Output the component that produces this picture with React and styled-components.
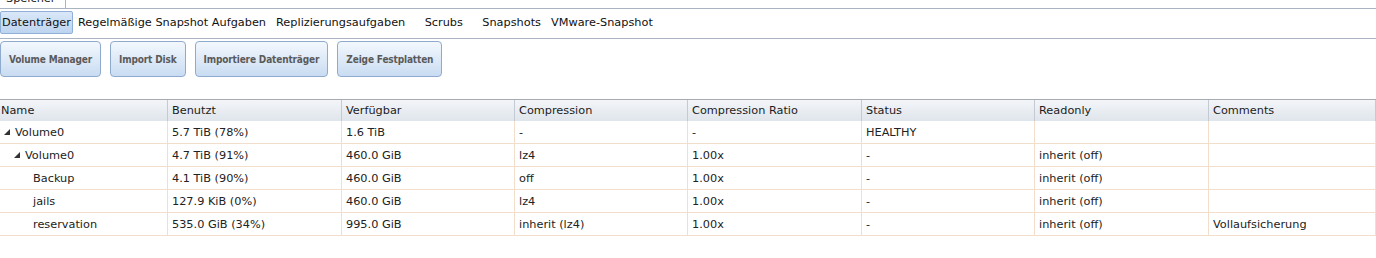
import styled, { createGlobalStyle } from "styled-components";

const GlobalStyle = createGlobalStyle`
  body {
    margin: 0;
    background: #fff;
    font-family: "DejaVu Sans", Verdana, sans-serif;
    font-size: 11.3px;
    color: #222;
  }
`;

const TopBar = styled.div`
  display: flex;
  align-items: flex-end;
  height: 8px;
  border-bottom: 1px solid #aab3c2;
  overflow: hidden;
`;

const MainTab = styled.div`
  height: 22px;
  width: 66px;
  box-sizing: border-box;
  padding: 0 0 4px 6px;
  display: flex;
  align-items: flex-end;
  border-right: 1px solid #aab3c2;
  margin-bottom: -1px;
  background: #fff;
  line-height: 13px;
`;

const SubTabs = styled.div`
  display: flex;
  align-items: center;
  padding: 2px 0 4px;
  border-bottom: 1px solid #aab3c2;
`;

const SubTab = styled.div`
  height: 23px;
  box-sizing: border-box;
  display: flex;
  align-items: center;
  justify-content: center;
  min-width: ${(p) => (p.$active ? "0" : "67px")};
  padding: 0 ${(p) => (p.$active ? "1px" : "4px")};
  color: #111;
  white-space: nowrap;
  border: 1px solid ${(p) => (p.$active ? "#8fb0d9" : "transparent")};
  border-radius: 2px;
  background: ${(p) =>
    p.$active ? "linear-gradient(#dae8f8, #bdd4ef)" : "transparent"};
`;

const Toolbar = styled.div`
  display: flex;
  gap: 9px;
  padding-top: 2px;
  margin-bottom: 22px;
`;

const Button = styled.button`
  height: 36px;
  padding: 0 8px;
  border: 1px solid #8eaacd;
  border-radius: 4px;
  background: linear-gradient(#f3f8fd, #c9dcf2);
  color: #5a5a5a;
  font-family: "DejaVu Sans Condensed", "DejaVu Sans", sans-serif;
  font-stretch: condensed;
  font-weight: bold;
  font-size: 10px;
  letter-spacing: -0.15px;
  white-space: nowrap;
`;

const COLS = "168px 174px 173px 173px 174px 173px 174px 1fr";

const HeaderRow = styled.div`
  display: grid;
  grid-template-columns: ${COLS};
  height: 22px;
  box-sizing: border-box;
  border-top: 1px solid #a7abb1;
  background: linear-gradient(#f3f5f8, #dfe5ec);
`;

const HeaderCell = styled.div`
  display: flex;
  align-items: center;
  padding-left: ${(p) => (p.$first ? "1px" : "4px")};
  border-right: 1px solid #c3cad4;
  color: #1c1c1c;
  white-space: nowrap;
`;

const Row = styled.div`
  display: grid;
  grid-template-columns: ${COLS};
  height: 23px;
  box-sizing: border-box;
  border-bottom: 1px solid #f1dfcc;
`;

const Cell = styled.div`
  display: flex;
  align-items: center;
  padding-left: 4px;
  border-right: 1px solid #f1dfcc;
  white-space: nowrap;
  overflow: hidden;
`;

const NameCell = styled(Cell)`
  padding-left: ${(p) => 4 + p.$level * 10}px;
`;

const Expando = styled.span`
  display: inline-flex;
  width: 11px;
  flex: none;
`;

function Arrow() {
  return (
    <Expando>
      <svg width="6" height="6" viewBox="0 0 6 6">
        <polygon points="6,0 6,6 0,6" fill="#333" />
      </svg>
    </Expando>
  );
}

const columns = [
  "Name",
  "Benutzt",
  "Verfügbar",
  "Compression",
  "Compression Ratio",
  "Status",
  "Readonly",
  "Comments",
];

const rows = [
  { level: 0, open: true, name: "Volume0", used: "5.7 TiB (78%)", avail: "1.6 TiB", comp: "-", ratio: "-", status: "HEALTHY", ro: "", comment: "" },
  { level: 1, open: true, name: "Volume0", used: "4.7 TiB (91%)", avail: "460.0 GiB", comp: "lz4", ratio: "1.00x", status: "-", ro: "inherit (off)", comment: "" },
  { level: 2, name: "Backup", used: "4.1 TiB (90%)", avail: "460.0 GiB", comp: "off", ratio: "1.00x", status: "-", ro: "inherit (off)", comment: "" },
  { level: 2, name: "jails", used: "127.9 KiB (0%)", avail: "460.0 GiB", comp: "lz4", ratio: "1.00x", status: "-", ro: "inherit (off)", comment: "" },
  { level: 2, name: "reservation", used: "535.0 GiB (34%)", avail: "995.0 GiB", comp: "inherit (lz4)", ratio: "1.00x", status: "-", ro: "inherit (off)", comment: "Vollaufsicherung" },
];

const tabs = [
  "Datenträger",
  "Regelmäßige Snapshot Aufgaben",
  "Replizierungsaufgaben",
  "Scrubs",
  "Snapshots",
  "VMware-Snapshot",
];

const buttons = ["Volume Manager", "Import Disk", "Importiere Datenträger", "Zeige Festplatten"];

export default function App() {
  return (
    <>
      <GlobalStyle />
      <TopBar>
        <MainTab>Speicher</MainTab>
      </TopBar>
      <SubTabs>
        {tabs.map((t, i) => (
          <SubTab key={t} $active={i === 0}>
            {t}
          </SubTab>
        ))}
      </SubTabs>
      <Toolbar>
        {buttons.map((b) => (
          <Button key={b}>{b}</Button>
        ))}
      </Toolbar>
      <HeaderRow>
        {columns.map((c, i) => (
          <HeaderCell key={c} $first={i === 0}>
            {c}
          </HeaderCell>
        ))}
      </HeaderRow>
      {rows.map((r, i) => (
        <Row key={i}>
          <NameCell $level={r.level > 1 ? 2.9 : r.level}>
            {r.open && <Arrow />}
            {r.name}
          </NameCell>
          <Cell>{r.used}</Cell>
          <Cell>{r.avail}</Cell>
          <Cell>{r.comp}</Cell>
          <Cell>{r.ratio}</Cell>
          <Cell>{r.status}</Cell>
          <Cell>{r.ro}</Cell>
          <Cell>{r.comment}</Cell>
        </Row>
      ))}
    </>
  );
}
